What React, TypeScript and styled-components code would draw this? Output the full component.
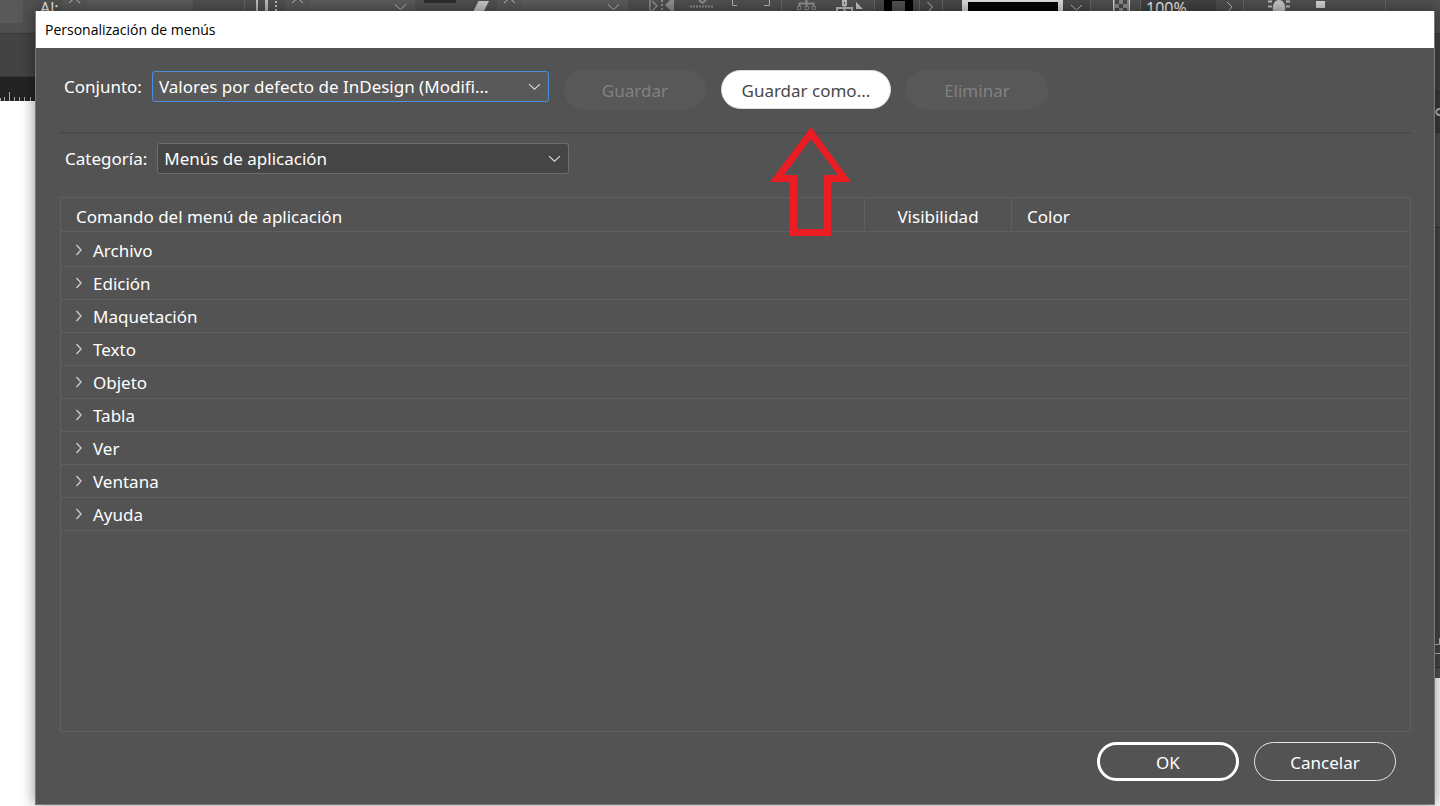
import React from "react";
import styled, { createGlobalStyle, css } from "styled-components";

const GlobalStyle = createGlobalStyle`
  *, *::before, *::after { box-sizing: border-box; }
  body {
    margin: 0;
    background: #ffffff;
    overflow: hidden;
  }
  body, button, select {
    font-family: "Noto Sans", "DejaVu Sans Condensed", sans-serif;
    font-size: 17px;
    line-height: 24px;
  }
`;

/* ---------- Application window behind the dialog ---------- */

const Stage = styled.div`
  display: grid;
  grid-template: minmax(100vh, auto) / minmax(0, 1fr);
  overflow: hidden;

  & > * {
    grid-area: 1 / 1;
  }
`;

const Workspace = styled.div`
  display: flex;
  flex-direction: column;
  min-width: 0;
  background: #ffffff;
`;

const ControlBar = styled.div`
  display: flex;
  flex: none;
  height: 34px;
  overflow: hidden;
  background: #505050;
  border-bottom: 1px solid #383838;
`;

const Cell = styled.div<{ $w: number; $tone?: string; $line?: boolean }>`
  flex: none;
  width: ${(p) => p.$w}px;
  height: 33px;
  background: ${(p) => p.$tone ?? "transparent"};
  ${(p) => p.$line && css`border-right: 1px solid #666666;`}

  svg {
    display: block;
  }
`;

const HomeTile = styled.div`
  flex: none;
  width: 23px;
  height: 23px;
  margin-right: 17px;
  background: #595959;
`;

const BarText = styled.span<{ $w: number; $tone?: string }>`
  flex: none;
  width: ${(p) => p.$w}px;
  padding-left: ${(p) => (p.$tone ? 5 : 0)}px;
  background: ${(p) => p.$tone ?? "transparent"};
  font-size: 16px;
  line-height: 16px;
  color: #e6e6e6;
`;

const WorkArea = styled.div`
  display: flex;
  flex: 1;
  justify-content: space-between;
`;

const LeftEdge = styled.div`
  width: 36px;
`;

const TabStrip = styled.div`
  height: 43px;
  background: #434343;
  border-bottom: 1px solid #363636;
`;

const Ruler = styled.div`
  height: 24px;
  background: #232323;

  svg {
    display: block;
  }
`;

const PanelDock = styled.div`
  display: flex;
  flex-direction: column;
  width: 40px;
  height: 644px;
  background: #505050;
`;

const DockRow = styled.div<{ $h: number; $tone: string; $align?: "center" | "flex-end" }>`
  display: flex;
  flex: none;
  align-items: ${(p) => p.$align ?? "center"};
  justify-content: flex-end;
  height: ${(p) => p.$h}px;
  background: ${(p) => p.$tone};
  border-bottom: 1px solid #303030;

  svg {
    display: block;
  }
`;

/* ---------- Dialog ---------- */

const Dialog = styled.section`
  display: flex;
  flex-direction: column;
  margin: 11px 5px 1px 35px;
  background: #535353;
  border: 1px solid #7d7979;
  border-top: 0;
  box-shadow: 0 0 14px rgba(0, 0, 0, 0.45);
  color: #ffffff;
  z-index: 1;
`;

const TitleBar = styled.h1`
  flex: none;
  height: 37px;
  margin: 0;
  padding: 0 9px;
  background: #ffffff;
  color: #000000;
  font-family: "Open Sans", "Noto Sans", sans-serif;
  font-size: 14px;
  font-weight: 400;
  line-height: 37px;
`;

const Body = styled.div`
  display: flex;
  flex: 1;
  flex-direction: column;
  padding: 22px 23px 23px 24px;
`;

const SetRow = styled.div`
  display: flex;
  align-items: flex-start;
  height: 64px;
  padding-left: 4px;
  border-bottom: 2px solid #4b4b4b;
`;

const CategoryRow = styled.div`
  display: flex;
  padding: 8px 0 21px 5px;
`;

const FieldLabel = styled.label`
  margin-right: 10px;
  line-height: 34px;
  white-space: nowrap;
`;

const SelectBox = styled.div<{ $w: number; $focus?: boolean }>`
  display: flex;
  align-items: center;
  flex: 0 1 ${(p) => p.$w}px;
  height: 31px;
  margin-top: 1px;
  background: ${(p) => (p.$focus ? "#595959" : "#454545")};
  border: 1px solid ${(p) => (p.$focus ? "#4a90d9" : "#6e6e6e")};
  border-radius: 3px;

  svg {
    flex: none;
    margin: 0 7px 0 -20px;
    pointer-events: none;
  }
`;

const Select = styled.select`
  appearance: none;
  flex: 1;
  min-width: 0;
  height: 29px;
  padding: 0 24px 0 6px;
  border: 0;
  outline: 0;
  background: transparent;
  color: #ffffff;
`;

const SetActions = styled.div`
  display: flex;
  gap: 15px;
  margin-left: 15px;
`;

const PillButton = styled.button<{ $kind: "muted" | "solid" | "outline" | "strong" }>`
  width: 142px;
  height: 39px;
  padding: 3px 0 0;
  border-radius: 20px;
  white-space: nowrap;
  ${(p) =>
    ({
      muted: css`
        background: #585858;
        border: 1px solid #5a5a5a;
        color: #818181;
      `,
      solid: css`
        width: 170px;
        background: #ffffff;
        border: 1px solid #dcdcdc;
        color: #484848;
      `,
      outline: css`
        background: transparent;
        border: 1px solid #e6e6e6;
        color: #ffffff;
      `,
      strong: css`
        background: transparent;
        border: 3px solid #ffffff;
        color: #ffffff;
      `,
    })[p.$kind]}
`;

const Pointed = styled.div`
  position: relative;
`;

const PointerArrow = styled.svg`
  position: absolute;
  top: 57px;
  left: 49px;
  z-index: 2;
`;

const ListFrame = styled.div`
  flex: 1;
  border: 1px solid #5f5f5f;
`;

const Table = styled.table`
  width: 100%;
  border-collapse: separate;
  border-spacing: 0;
  table-layout: fixed;
`;

const HeadCell = styled.th<{ $w?: string; $align?: "left" | "center" }>`
  width: ${(p) => p.$w ?? "auto"};
  height: 34px;
  padding: 5px 15px 0;
  border-bottom: 1px solid #5f5f5f;
  border-right: 1px solid #5f5f5f;
  font-weight: 400;
  line-height: 28px;
  text-align: ${(p) => p.$align ?? "left"};

  &:last-child {
    border-right: 0;
  }
`;

const NameCell = styled.td`
  height: 33px;
  padding: 2px 0 0 14px;
  border-bottom: 1px solid #5f5f5f;

  tr:first-child > & {
    height: 35px;
    padding-top: 4px;
  }
`;

const EmptyCell = styled.td`
  border-bottom: 1px solid #5f5f5f;
`;

const Expander = styled.button`
  display: flex;
  align-items: center;
  gap: 10px;
  padding: 0;
  border: 0;
  background: none;
  color: #ffffff;

  svg {
    margin-bottom: 3px;
  }
`;

const Footer = styled.footer`
  display: flex;
  justify-content: flex-end;
  gap: 15px;
  padding: 10px 15px 0 0;
`;

/* ---------- Icons ---------- */

const Chevron = () => (
  <svg width="13" height="8" viewBox="0 0 13 8" fill="none" stroke="#dcdcdc" strokeWidth="1.1" aria-hidden="true">
    <path d="M1 1.2 6.5 6.2 12 1.2" />
  </svg>
);

const Disclosure = () => (
  <svg width="8" height="12" viewBox="0 0 8 12" fill="none" stroke="#c8c8c8" strokeWidth="1.4" aria-hidden="true">
    <path d="M1.5 1 6 6 1.5 11" />
  </svg>
);

const BarIcon = ({ w, children }: { w: number; children: React.ReactNode }) => (
  <svg width={w} height="33" viewBox={`0 0 ${w} 33`} fill="none" stroke="#bdbdbd" aria-hidden="true">
    {children}
  </svg>
);

const Spinner = () => (
  <Cell $w={25} $tone="#575757">
    <BarIcon w={25}>
      <path d="M7 3 12.500-2 18 3" />
    </BarIcon>
  </Cell>
);

const ControlStrip = () => (
  <ControlBar>
    <HomeTile />
    <BarText $w={22}>Al:</BarText>
    <Spinner />
    <Cell $w={106} $tone="#5b5b5b" />
    <Cell $w={52} $line />
    <Cell $w={40}>
      <BarIcon w={40}>
        <path d="M12 0V33" strokeWidth="2" />
        <path d="M21.500 0V33" strokeWidth="3" />
        <path d="M31 1V33" strokeWidth="2" strokeDasharray="2 2" />
      </BarIcon>
    </Cell>
    <Spinner />
    <Cell $w={105} $tone="#5b5b5b">
      <BarIcon w={105}>
        <path d="M85 4.500 90.500 9.500 96 4.500" />
      </BarIcon>
    </Cell>
    <Cell $w={82}>
      <BarIcon w={82}>
        <path d="M9 0H41V2a1 1 0 0 1-1 1H10a1 1 0 0 1-1-1Z" fill="#2d2d2d" stroke="none" />
        <path d="M63.500 1H74L69 11H58.500Z" fill="#c4c4c4" stroke="none" />
      </BarIcon>
    </Cell>
    <Spinner />
    <Cell $w={106} $tone="#5b5b5b">
      <BarIcon w={106}>
        <path d="M86 4.500 91.500 9.500 97 4.500" />
      </BarIcon>
    </Cell>
    <Cell $w={154} $line>
      <BarIcon w={154}>
        <g stroke="#8f8f8f">
          <path d="M22 0V11M24 1 29 6 24 11" strokeWidth="1.500" />
          <path d="M34 0V11" strokeWidth="2" strokeDasharray="2 2" />
          <path d="M46 0V11H43L37 5 42 0Z" fill="#8f8f8f" stroke="none" />
          <path d="M62 6.500H86" strokeDasharray="2 1" strokeWidth="2" />
          <path d="M71 0 74.500 3 78 0" strokeWidth="2" />
          <path d="M104.500 0V5.500H109M141.500 0V5.500H136" stroke="#b5b5b5" />
        </g>
      </BarIcon>
    </Cell>
    <Cell $w={93} $line>
      <BarIcon w={93}>
        <g stroke="#8f8f8f">
          <path d="M24.500 0V7M17.500 7V3.500H31.500V7" strokeWidth="2" />
          <path d="M15.500 6.500H19V9.500H15.500ZM23 6.500H26.500V9.500H23ZM30 6.500H33.500V9.500H30Z" />
        </g>
        <path d="M61 1H64V5H61ZM62.500 5V11M55 11V8H70V11" strokeWidth="2" />
        <path d="M74 2 81 9H74Z" fill="#c4c4c4" stroke="none" />
      </BarIcon>
    </Cell>
    <Cell $w={45} $tone="#484848" $line>
      <BarIcon w={45}>
        <path d="M9 0H38V12H9Z" fill="#000" stroke="none" />
        <path d="M17 1H30V12H17Z" fill="#505050" stroke="none" />
      </BarIcon>
    </Cell>
    <Cell $w={23} $tone="#484848" $line>
      <BarIcon w={23}>
        <path d="M7.500 2 12.500 7 8 12" />
      </BarIcon>
    </Cell>
    <Cell $w={148} $tone="#484848" $line>
      <BarIcon w={148}>
        <path d="M19 0H120V12H19Z" fill="#d9d9d9" stroke="none" />
        <path d="M25 2H115V12H25Z" fill="#000" stroke="none" />
        <path d="M128 5 133.500 10 139 5" />
      </BarIcon>
    </Cell>
    <Cell $w={50} $line>
      <BarIcon w={50}>
        <path d="M22 0H39V12H22Z" fill="#8a8a8a" stroke="none" />
        <path d="M24 0H28V4H24ZM32 0H36V4H32ZM28 4H32V8H28ZM24 8H28V12H24ZM32 8H36V12H32Z" fill="#4a4a4a" stroke="none" />
        <path d="M22.500 0V12M38.500 0V12" stroke="#d5d5d5" />
      </BarIcon>
    </Cell>
    <BarText $w={75} $tone="#414141">100%</BarText>
    <Cell $w={28} $tone="#4d4d4d" $line>
      <BarIcon w={28}>
        <path d="M11 2 16 7 12 12" />
      </BarIcon>
    </Cell>
    <Cell $w={142} $line>
      <BarIcon w={142}>
        <path d="M29 11C28 6 30 0 35 0S42 6 41 11Z" fill="#c4c4c4" stroke="none" />
        <path d="M24 1.500H28M24 6.500H28M42 1.500H46M42 6.500H46" strokeWidth="2" />
        <path d="M72 1H81V8H72Z" fill="#d0d0d0" stroke="none" />
      </BarIcon>
    </Cell>
  </ControlBar>
);

const Arrow = () => (
  <PointerArrow width="82" height="110" viewBox="0 0 82 110" aria-hidden="true">
    <path
      fill="#ec1c24"
      fillRule="evenodd"
      d="M41 0 81 55H61V109H20V55H0ZM41 12 14 48H27V102H54V48H68Z"
    />
  </PointerArrow>
);

const commands = [
  "Archivo",
  "Edición",
  "Maquetación",
  "Texto",
  "Objeto",
  "Tabla",
  "Ver",
  "Ventana",
  "Ayuda",
];

export default function App() {
  return (
    <>
      <GlobalStyle />
      <Stage>
        <Workspace>
          <ControlStrip />
          <WorkArea>
            <LeftEdge>
              <TabStrip />
              <Ruler>
                <svg width="36" height="24" viewBox="0 0 36 24" stroke="#a8a8a8" fill="none" aria-hidden="true">
                  <path d="M.5 21V24M4.500 20V24M9.500 15V24M14.500 20V24M19.500 20V24M24.500 20V24M30.500 20V24" />
                </svg>
              </Ruler>
            </LeftEdge>
            <PanelDock>
              <DockRow $h={58} $tone="#404040" />
              <DockRow $h={41} $tone="#3a3a3a">
                <svg width="5" height="10" viewBox="0 0 5 10" fill="none" stroke="#b5b5b5" strokeWidth="2" aria-hidden="true">
                  <path d="M5 2C0 1 0 9 5 8" />
                </svg>
              </DockRow>
              <DockRow $h={95} $tone="#4b4b4b" />
              <DockRow $h={440} $tone="#454545" $align="flex-end">
                <svg width="5" height="30" viewBox="0 0 5 30" fill="none" stroke="#b5b5b5" aria-hidden="true">
                  <path d="M0 7.500H4.500V1M0 16.500H5" />
                </svg>
              </DockRow>
            </PanelDock>
          </WorkArea>
        </Workspace>

        <Dialog role="dialog" aria-labelledby="dialog-title">
          <TitleBar id="dialog-title">Personalización de menús</TitleBar>
          <Body>
            <SetRow>
              <FieldLabel htmlFor="menu-set">Conjunto:</FieldLabel>
              <SelectBox $w={397} $focus>
                <Select id="menu-set">
                  <option>Valores por defecto de InDesign (Modifi...</option>
                </Select>
                <Chevron />
              </SelectBox>
              <SetActions>
                <PillButton type="button" $kind="muted" disabled>
                  Guardar
                </PillButton>
                <Pointed>
                  <PillButton type="button" $kind="solid">
                    Guardar como...
                  </PillButton>
                  <Arrow />
                </Pointed>
                <PillButton type="button" $kind="muted" disabled>
                  Eliminar
                </PillButton>
              </SetActions>
            </SetRow>

            <CategoryRow>
              <FieldLabel htmlFor="menu-category">Categoría:</FieldLabel>
              <SelectBox $w={412}>
                <Select id="menu-category">
                  <option>Menús de aplicación</option>
                </Select>
                <Chevron />
              </SelectBox>
            </CategoryRow>

            <ListFrame>
              <Table>
                <thead>
                  <tr>
                    <HeadCell scope="col">Comando del menú de aplicación</HeadCell>
                    <HeadCell scope="col" $w="147px" $align="center">
                      Visibilidad
                    </HeadCell>
                    <HeadCell scope="col" $w="398px">
                      Color
                    </HeadCell>
                  </tr>
                </thead>
                <tbody>
                  {commands.map((name) => (
                    <tr key={name}>
                      <NameCell>
                        <Expander type="button" aria-expanded={false}>
                          <Disclosure />
                          {name}
                        </Expander>
                      </NameCell>
                      <EmptyCell />
                      <EmptyCell />
                    </tr>
                  ))}
                </tbody>
              </Table>
            </ListFrame>

            <Footer>
              <PillButton type="button" $kind="strong">
                OK
              </PillButton>
              <PillButton type="button" $kind="outline">
                Cancelar
              </PillButton>
            </Footer>
          </Body>
        </Dialog>
      </Stage>
    </>
  );
}
